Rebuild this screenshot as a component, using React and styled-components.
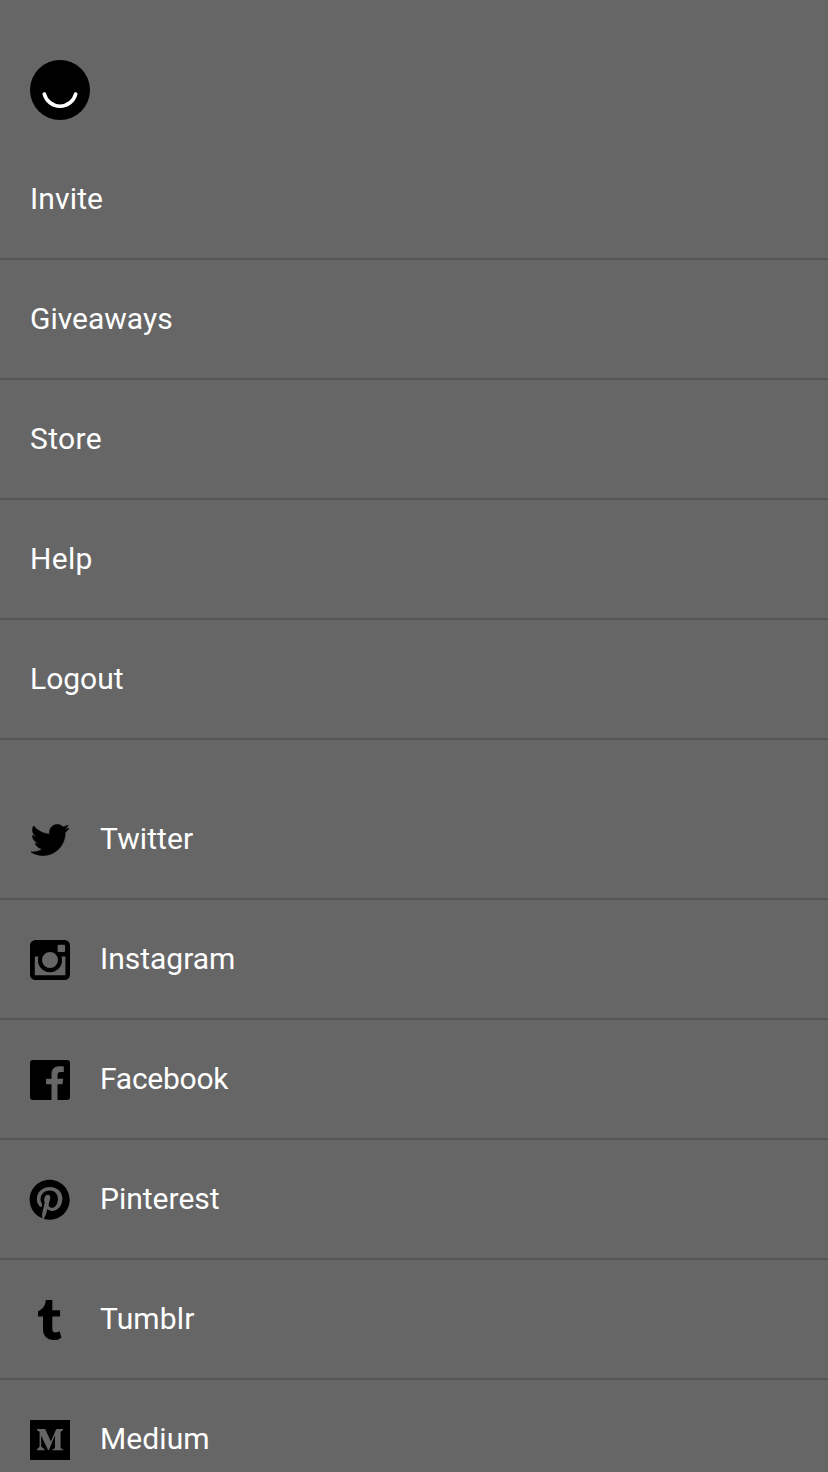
import React from "react";
import styled, { createGlobalStyle } from "styled-components";
import { FaTwitter, FaPinterest } from "react-icons/fa";

const GlobalStyle = createGlobalStyle`
  * { box-sizing: border-box; }
  html, body { margin: 0; background: #666; }
  body { overflow: hidden; }
`;

const Drawer = styled.nav`
  height: 1472px;
  overflow: hidden;
  padding-top: 60px;
  background: #666;
  color: #fff;
  font-family: Roboto, "Liberation Sans", sans-serif;
  font-size: 30px;
  line-height: 36px;
`;

const Logo = styled.svg`
  display: block;
  width: 60px;
  height: 60px;
  margin: 0 0 20px 30px;
`;

const List = styled.ul`
  list-style: none;
  margin: 0 0 40px;
  padding: 0;
`;

const Row = styled.li`
  display: flex;
  align-items: center;
  gap: 30px;
  height: 120px;
  padding: 0 30px;
  border-bottom: 2px solid #555;
`;

const Label = styled.span`
  letter-spacing: ${(p) => p.$tracking || 0}px;
  white-space: nowrap;
`;

const IconBox = styled.span`
  display: flex;
  align-items: center;
  justify-content: center;
  flex: none;
  width: 40px;
  height: 40px;
  margin-top: 2px;
  color: #000;

  svg {
    display: block;
    flex: none;
    width: ${(p) => p.$size || 40}px;
    height: ${(p) => p.$size || 40}px;
  }
`;

const Twitter = () => <FaTwitter strokeWidth={10} stroke="currentColor" />;

const Instagram = () => (
  <svg viewBox="0 0 40 40" fill="currentColor">
    <path
      fillRule="evenodd"
      d="M5.5 0h29A5.5 5.5 0 0 1 40 5.5v29a5.5 5.5 0 0 1-5.5 5.5h-29A5.5 5.5 0 0 1 0 34.5v-29A5.5 5.5 0 0 1 5.5 0ZM28.7 4.8Q27.6 4.8 27.6 5.9V11Q27.6 12.1 28.7 12.1H34Q35.1 12.1 35.1 11V5.9Q35.1 4.8 34 4.8ZM4.8 16.4V35.2H35.4V16.4H31.5A12.1 12.1 0 1 1 8.5 16.4ZM20 12a8 8 0 1 0 0 16a8 8 0 0 0 0-16Z"
    />
  </svg>
);

const Facebook = () => (
  <svg viewBox="0 0 40 40" fill="currentColor">
    <path d="M3 0H37A3 3 0 0 1 40 3V37A3 3 0 0 1 37 40H27.5V24.3H32.5L33.2 18.8H27.5V15C27.5 13 28.3 12 30.6 12H33.8V6.6C33.2 6.5 31.3 6.3 29.1 6.3C24.5 6.3 21.5 9.1 21.5 14.2V18.8H16.1V24.3H21.5V40H3A3 3 0 0 1 0 37V3A3 3 0 0 1 3 0Z" />
  </svg>
);

const Tumblr = () => (
  <svg viewBox="0 0 40 40" fill="currentColor">
    <path d="M15.8 0H22.3V10.2H30.1V16.6H22.3V28.4C22.3 31 23.2 32.4 25.4 32.4C26.8 32.4 28.5 31.8 29.6 31.2L31.4 37.4C30 39 27 40 23.9 40C17 40 13 36 13 29.6V16.6H8V11.2C12.4 9.6 15.4 6 15.8 0Z" />
  </svg>
);

const Medium = () => (
  <svg viewBox="0 0 40 40">
    <path fill="#000" d="M0 0h40v40H0z" />
    <path
      fill="#666"
      d="M7 9H15.2L20.9 21.4L26.3 9H33V10.2L30.6 11.7V28.2L33 29.2V30.2H22.6V29.2L25 28.2V15.2L18.9 30H18L11.1 15.4V26.6L14.5 29.2V30.2H7V29.2L9.6 26.8V11.8L7 10.2Z"
    />
  </svg>
);

const pages = [
  { name: "Invite", tracking: 0.15 },
  { name: "Giveaways" },
  { name: "Store", tracking: 0.35 },
  { name: "Help", tracking: 0.3 },
  { name: "Logout" },
];

const networks = [
  { name: "Twitter", icon: Twitter, size: 38, tracking: 0.1 },
  { name: "Instagram", icon: Instagram },
  { name: "Facebook", icon: Facebook, tracking: -0.25 },
  { name: "Pinterest", icon: FaPinterest, size: 41.3 },
  { name: "Tumblr", icon: Tumblr, tracking: 0.15 },
  { name: "Medium", icon: Medium, tracking: 0.1 },
];

export default function App() {
  return (
    <>
      <GlobalStyle />
      <Drawer>
        <Logo viewBox="0 0 60 60">
          <circle cx="30" cy="30" r="30" />
          <path
            d="M14.3 34a16.2 16.2 0 0 0 31.4 0"
            fill="none"
            stroke="#fff"
            strokeWidth="3.6"
            strokeLinecap="round"
          />
        </Logo>
        <List>
          {pages.map((p) => (
            <Row key={p.name}>
              <Label $tracking={p.tracking}>{p.name}</Label>
            </Row>
          ))}
        </List>
        <List>
          {networks.map(({ name, icon: Icon, size, tracking }) => (
            <Row key={name}>
              <IconBox $size={size}>
                <Icon />
              </IconBox>
              <Label $tracking={tracking}>{name}</Label>
            </Row>
          ))}
        </List>
      </Drawer>
    </>
  );
}
